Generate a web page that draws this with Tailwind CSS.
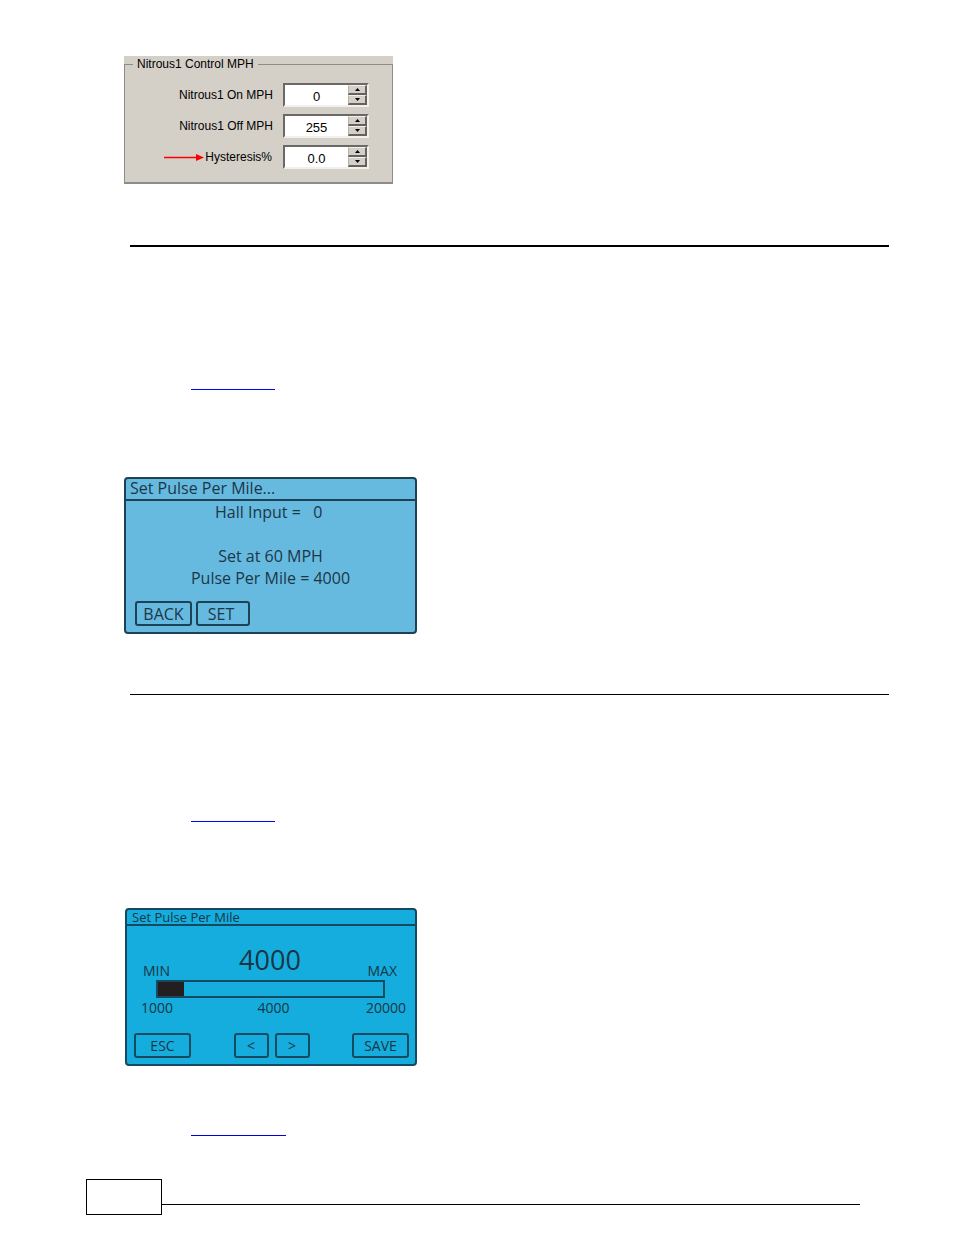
<!DOCTYPE html>
<html lang="en">
<head>
<meta charset="utf-8">
<meta name="viewport" content="width=device-width, initial-scale=1">
<title>Nitrous control and pulse per mile</title>
<script src="https://cdn.jsdelivr.net/npm/@tailwindcss/browser@4"></script>
</head>
<body class="bg-white text-black">
<svg class="hidden" aria-hidden="true">
  <symbol id="up" viewBox="0 0 5 3"><path d="M0 3 2.5 0 5 3z"/></symbol>
  <symbol id="down" viewBox="0 0 5 3"><path d="M0 0h5L2.5 3z"/></symbol>
</svg>
<main class="pt-14 pl-[124px] pr-[65px]">

  <section class="w-[269px] bg-[#d4d0c8] font-['Liberation_Sans',sans-serif] text-[12px] leading-4">
    <fieldset class="border border-[#8c8c88] border-b-2 pt-[11px] pb-[13px] pr-[23px]">
      <legend class="ml-2 px-1">Nitrous1 Control MPH</legend>
      <div class="flex flex-col gap-[7px]">
        <div class="flex items-center justify-end gap-[10px]">
          <label for="on">Nitrous1 On MPH</label>
          <div class="flex h-6 w-[86px] border-2 border-t-[#6b6965] border-l-[#6b6965] border-r-[#f2f0ec] border-b-[#f2f0ec] bg-white">
            <input id="on" value="0" class="min-w-0 flex-1 pt-1 text-center text-[13px] leading-4 outline-none">
            <div class="flex w-[19px] flex-col">
              <button aria-label="Increase Nitrous1 On MPH" class="flex flex-1 items-center justify-center border border-r-2 border-b-2 border-b-[#65625e] border-r-[#65625e] border-t-[#f2f0ec] border-l-[#b5b1aa] bg-[#d4d0c8]"><svg class="h-[3px] w-[5px]"><use href="#up"/></svg></button>
              <button aria-label="Decrease Nitrous1 On MPH" class="flex flex-1 items-center justify-center border border-r-2 border-b-2 border-b-[#65625e] border-r-[#65625e] border-t-[#f2f0ec] border-l-[#b5b1aa] bg-[#d4d0c8]"><svg class="h-[3px] w-[5px]"><use href="#down"/></svg></button>
            </div>
          </div>
        </div>
        <div class="flex items-center justify-end gap-[10px]">
          <label for="off">Nitrous1 Off MPH</label>
          <div class="flex h-6 w-[86px] border-2 border-t-[#6b6965] border-l-[#6b6965] border-r-[#f2f0ec] border-b-[#f2f0ec] bg-white">
            <input id="off" value="255" class="min-w-0 flex-1 pt-1 text-center text-[13px] leading-4 outline-none">
            <div class="flex w-[19px] flex-col">
              <button aria-label="Increase Nitrous1 Off MPH" class="flex flex-1 items-center justify-center border border-r-2 border-b-2 border-b-[#65625e] border-r-[#65625e] border-t-[#f2f0ec] border-l-[#b5b1aa] bg-[#d4d0c8]"><svg class="h-[3px] w-[5px]"><use href="#up"/></svg></button>
              <button aria-label="Decrease Nitrous1 Off MPH" class="flex flex-1 items-center justify-center border border-r-2 border-b-2 border-b-[#65625e] border-r-[#65625e] border-t-[#f2f0ec] border-l-[#b5b1aa] bg-[#d4d0c8]"><svg class="h-[3px] w-[5px]"><use href="#down"/></svg></button>
            </div>
          </div>
        </div>
        <div class="flex items-center justify-end gap-[11px]">
          <label for="hys" class="flex items-center gap-px">
            <svg class="h-[7px] w-10" viewBox="0 0 40 7" aria-hidden="true"><path d="M0 3.5h33" stroke="#f00" stroke-width="1.4"/><path d="M32 0v7l8-3.5z" fill="#f00"/></svg>
            Hysteresis%</label>
          <div class="flex h-6 w-[86px] border-2 border-t-[#6b6965] border-l-[#6b6965] border-r-[#f2f0ec] border-b-[#f2f0ec] bg-white">
            <input id="hys" value="0.0" class="min-w-0 flex-1 pt-1 text-center text-[13px] leading-4 outline-none">
            <div class="flex w-[19px] flex-col">
              <button aria-label="Increase Hysteresis" class="flex flex-1 items-center justify-center border border-r-2 border-b-2 border-b-[#65625e] border-r-[#65625e] border-t-[#f2f0ec] border-l-[#b5b1aa] bg-[#d4d0c8]"><svg class="h-[3px] w-[5px]"><use href="#up"/></svg></button>
              <button aria-label="Decrease Hysteresis" class="flex flex-1 items-center justify-center border border-r-2 border-b-2 border-b-[#65625e] border-r-[#65625e] border-t-[#f2f0ec] border-l-[#b5b1aa] bg-[#d4d0c8]"><svg class="h-[3px] w-[5px]"><use href="#down"/></svg></button>
            </div>
          </div>
        </div>
      </div>
    </fieldset>
  </section>

  <hr class="mt-[61px] ml-[6px] border-t-2 border-black">
  <hr class="mt-[142px] ml-[67px] w-[84px] border-[#0000ff]">

  <section class="mt-[87px] flex h-[157px] w-[293px] flex-col rounded-[4px] border-2 border-[#1d4256] bg-[#66bae0] font-['Open_Sans',sans-serif] text-[16px] font-medium leading-[22px] text-[#1d3646]">
    <h2 class="h-[22px] border-b-2 border-[#1d4256] pl-1 leading-[18px]">Set Pulse Per Mile...</h2>
    <p class="pl-[89px] whitespace-pre">Hall Input =   0</p>
    <p class="mt-[22px] text-center">Set at 60 MPH</p>
    <p class="text-center">Pulse Per Mile = 4000</p>
    <div class="mt-auto mb-[6px] flex gap-1 pl-[9px]">
      <button class="h-[25px] w-[57px] rounded-[3px] border-2 border-[#1d4256] leading-5">BACK</button>
      <button class="h-[25px] w-[54px] rounded-[3px] border-2 border-[#1d4256] pr-1 leading-5">SET</button>
    </div>
  </section>

  <hr class="mt-[60px] ml-[6px] border-black">
  <hr class="mt-[126px] ml-[67px] w-[84px] border-[#0000ff]">

  <section class="mt-[86px] ml-px flex h-[158px] w-[292px] flex-col rounded-[4px] border-2 border-[#154a60] bg-[#15addd] font-['Open_Sans',sans-serif] text-[14px] font-medium leading-[18px] text-[#173644]">
    <h2 class="h-4 border-b-2 border-[#154a60] pl-[5px] text-[13px] leading-[15px]">Set Pulse Per Mile</h2>
    <div class="mt-[18px] flex items-end justify-between pr-[18px] pl-4">
      <label for="ppm" class="w-[68px]">MIN</label>
      <output for="ppm" class="mb-1 text-[27px] leading-8 font-normal">4000</output>
      <span class="w-[68px] text-right">MAX</span>
    </div>
    <input id="ppm" type="range" min="1000" max="20000" value="4000" class="ml-[29px] h-[18px] w-[229px] appearance-none border-2 border-[#154a60] bg-[linear-gradient(90deg,#231f20_26px,transparent_26px)] [&::-webkit-slider-thumb]:opacity-0">
    <div class="mt-px flex justify-between pr-[9px] pl-[14px]">
      <span class="w-10">1000</span><span>4000</span><span class="w-10 text-right">20000</span>
    </div>
    <div class="mt-auto mb-[6px] flex justify-between pr-[6px] pl-[7px]">
      <button class="h-[25px] w-[57px] rounded-[3px] border-2 border-[#154a60]">ESC</button>
      <div class="flex gap-[6px]">
        <button aria-label="Decrease" class="h-[25px] w-[35px] rounded-[3px] border-2 border-[#154a60]">&lt;</button>
        <button aria-label="Increase" class="h-[25px] w-[35px] rounded-[3px] border-2 border-[#154a60]">&gt;</button>
      </div>
      <button class="h-[25px] w-[57px] rounded-[3px] border-2 border-[#154a60]">SAVE</button>
    </div>
  </section>

  <hr class="mt-[69px] ml-[67px] w-[95px] border-[#0000e0]">
</main>
<footer class="mt-[43px] flex items-end pr-[94px] pl-[86px]">
  <div class="h-9 w-[76px] border border-black"></div>
  <hr class="mb-[10px] flex-1 border-black">
</footer>
</body>
</html>
